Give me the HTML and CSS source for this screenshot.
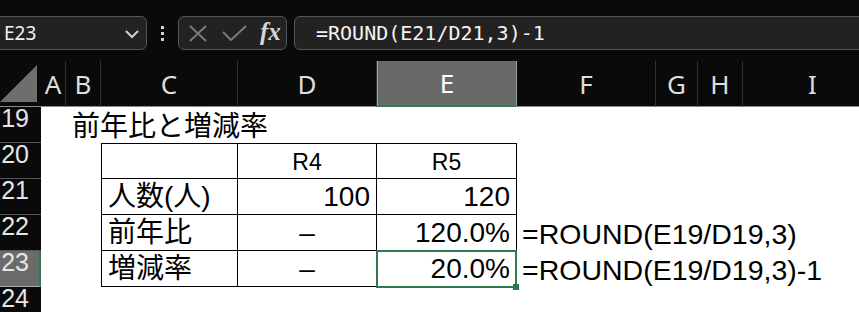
FILE: index.html
```html
<!DOCTYPE html>
<html lang="ja">
<head>
    <meta charset="UTF-8">
    <meta name="viewport" content="width=device-width, initial-scale=1.0">
    <title>前年比と増減率</title>
    <link rel="stylesheet" href="styles.css">
</head>
<body>

    <!-- Formula Bar -->
    <div class="toolbar">
        <div class="name-box">
            <span>E23</span>
            <svg class="chevron" width="16" height="10" viewBox="0 0 16 10">
                <polyline points="2,2 8,8 14,2" fill="none" stroke="#d0d0d0" stroke-width="2"/>
            </svg>
        </div>
        <div class="dots"><i></i><i></i><i></i></div>
        <div class="fx-box">
            <svg width="20" height="17" viewBox="0 0 20 17">
                <line x1="2" y1="1" x2="18" y2="16" stroke="#7a7a7a" stroke-width="2"/>
                <line x1="18" y1="1" x2="2" y2="16" stroke="#7a7a7a" stroke-width="2"/>
            </svg>
            <svg width="25" height="16" viewBox="0 0 25 16">
                <polyline points="1,7 9,15 24,1" fill="none" stroke="#7a7a7a" stroke-width="2"/>
            </svg>
            <span class="fx">fx</span>
        </div>
        <div class="formula-box">=ROUND(E21/D21,3)-1</div>
    </div>

    <!-- Sheet Grid -->
    <div class="sheet">
        <!-- column headers -->
        <div class="corner">
            <svg width="37" height="41" viewBox="0 0 37 41"><polygon points="37,4 37,41 0,41" fill="#6e6e6e"/></svg>
        </div>
        <div class="col-h">A</div>
        <div class="col-h">B</div>
        <div class="col-h">C</div>
        <div class="col-h">D</div>
        <div class="col-h sel">E</div>
        <div class="col-h">F</div>
        <div class="col-h">G</div>
        <div class="col-h">H</div>
        <div class="col-h">I</div>

        <!-- row 19 -->
        <div class="row-h">19</div>
        <div class="c"></div>
        <div class="c title">前年比と増減率</div>
        <div class="c"></div><div class="c"></div><div class="c"></div>
        <div class="c"></div><div class="c"></div><div class="c"></div><div class="c"></div>

        <!-- row 20 -->
        <div class="row-h">20</div>
        <div class="c"></div><div class="c"></div>
        <div class="c t first top"></div>
        <div class="c t top head">R4</div>
        <div class="c t top head">R5</div>
        <div class="c"></div><div class="c"></div><div class="c"></div><div class="c"></div>

        <!-- row 21 -->
        <div class="row-h">21</div>
        <div class="c"></div><div class="c"></div>
        <div class="c t first">人数(人)</div>
        <div class="c t num">100</div>
        <div class="c t num">120</div>
        <div class="c"></div><div class="c"></div><div class="c"></div><div class="c"></div>

        <!-- row 22 -->
        <div class="row-h">22</div>
        <div class="c"></div><div class="c"></div>
        <div class="c t first">前年比</div>
        <div class="c t dash">–</div>
        <div class="c t num">120.0%</div>
        <div class="c note">=ROUND(E19/D19,3)</div>
        <div class="c"></div><div class="c"></div><div class="c"></div>

        <!-- row 23 -->
        <div class="row-h sel">23</div>
        <div class="c"></div><div class="c"></div>
        <div class="c t first">増減率</div>
        <div class="c t dash">–</div>
        <div class="c t num active">20.0%</div>
        <div class="c note">=ROUND(E19/D19,3)-1</div>
        <div class="c"></div><div class="c"></div><div class="c"></div>

        <!-- row 24 -->
        <div class="row-h">24</div>
        <div class="c"></div><div class="c"></div><div class="c"></div><div class="c"></div>
        <div class="c"></div><div class="c"></div><div class="c"></div><div class="c"></div><div class="c"></div>
    </div>

</body>
</html>
```

FILE: styles.css
```css
/* Page */
body {
    margin: 0;
    background-color: #0a0a0a;
    width: 859px;
    height: 312px;
    overflow: hidden;
    font-family: "Liberation Sans", "Noto Sans CJK JP", sans-serif;
}

/* Formula Bar */
.toolbar {
    height: 61px;
    box-sizing: border-box;
    padding-top: 16px;
    display: flex;
    align-items: flex-start;
}

.name-box,
.fx-box,
.formula-box {
    height: 34px;
    box-sizing: border-box;
    border: 1px solid #555;
    border-radius: 6px;
    background: #222;
    display: flex;
    align-items: center;
}

.name-box {
    width: 153px;
    margin-left: -6px;
    padding: 0 6px 0 9px;
    justify-content: space-between;
    color: #f2f2f2;
    font-family: "Noto Sans", sans-serif;
    font-size: 19px;
}

.chevron {
    margin-top: 2px;
}

.dots {
    width: 31px;
    height: 34px;
    display: flex;
    flex-direction: column;
    align-items: center;
    justify-content: center;
    gap: 3px;
}

.dots i {
    width: 3px;
    height: 3px;
    background: #d0d0d0;
}

.fx-box {
    width: 109px;
    padding-left: 9px;
    gap: 14px;
}

.fx {
    font-family: "Liberation Serif", "DejaVu Serif", serif;
    font-style: italic;
    font-weight: bold;
    font-size: 25px;
    color: #d6d6d6;
    margin-left: -1px;
    margin-top: -3px;
}

.formula-box {
    flex: 1;
    margin-left: 7px;
    margin-right: -10px;
    padding-left: 21px;
    color: #f2f2f2;
    font-family: "DejaVu Sans Mono", "Liberation Mono", monospace;
    font-size: 20px;
}

/* Sheet */
.sheet {
    display: grid;
    grid-template-columns: 41px 25px 35px 137px 139px 140px 139px 42px 45px 140px;
    grid-template-rows: 46px repeat(6, 36px);
    background: #fff;
}

.corner {
    background: #0a0a0a;
    border-bottom: 1px solid #8a8a8a;
}

.corner svg {
    display: block;
}

.col-h {
    background: #0a0a0a;
    color: #dedede;
    font-family: "Noto Sans", sans-serif;
    font-size: 26px;
    display: flex;
    align-items: center;
    justify-content: center;
    border-right: 1px solid #333;
    border-bottom: 1px solid #8a8a8a;
    box-sizing: border-box;
}

.col-h.sel {
    background: #696969;
    color: #fff;
    border-left: 1px solid #a0a0a0;
    border-right: 1px solid #a0a0a0;
    border-bottom: 2px solid #2f7a4d;
}

.row-h {
    background: #0a0a0a;
    color: #e6e6e6;
    font-family: "Liberation Sans", sans-serif;
    font-size: 25px;
    line-height: 22px;
    text-align: right;
    padding-right: 12px;
    border-bottom: 1px solid #555;
    box-sizing: border-box;
}

.row-h.sel {
    background: #6b6b6b;
    border-right: 2px solid #2f7a4d;
    padding-right: 10px;
    border-bottom-color: #aaa;
}

/* Cells */
.c {
    position: relative;
    display: flex;
    align-items: flex-end;
    box-sizing: border-box;
    padding: 0 6px 3px;
    font-size: 28px;
    line-height: 1;
    color: #000;
    white-space: nowrap;
}

.title {
    padding-left: 6px;
    padding-bottom: 2px;
}

.t {
    border-right: 1px solid #000;
    border-bottom: 1px solid #000;
}

.t.first {
    border-left: 1px solid #000;
}

.t.top {
    border-top: 1px solid #000;
}

.head {
    justify-content: center;
    font-size: 23px;
    padding-bottom: 4px;
}

.num {
    justify-content: flex-end;
}

.dash {
    justify-content: center;
}

.note {
    padding-left: 5px;
    font-size: 28.5px;
}

/* Selected cell */
.active::after {
    content: "";
    position: absolute;
    top: -1px;
    left: -1px;
    right: -1px;
    bottom: -2px;
    border: 2px solid #2f7a4d;
}

.active::before {
    content: "";
    position: absolute;
    right: -3px;
    bottom: -4px;
    width: 6px;
    height: 6px;
    background: #2f7a4d;
    z-index: 1;
}
```
